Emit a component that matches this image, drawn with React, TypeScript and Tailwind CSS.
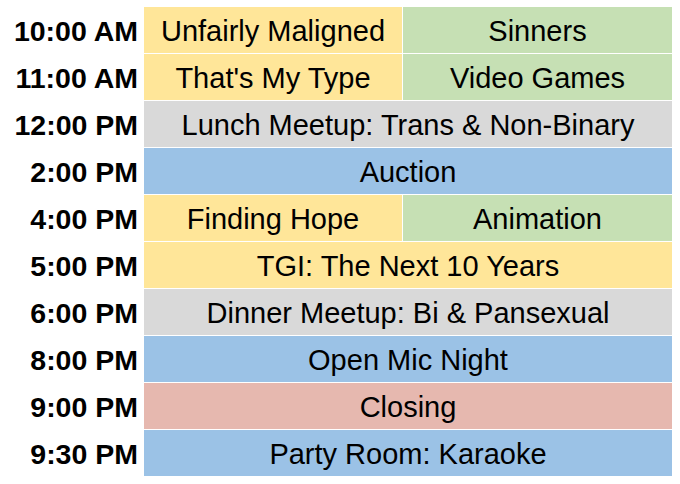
type Cell = { text: string; color: string };
type Row = { time: string; cells: Cell[] };

const Y = "bg-[#ffe699]";
const G = "bg-[#c6e0b4]";
const S = "bg-[#d9d9d9]";
const B = "bg-[#9bc2e6]";
const P = "bg-[#e6b8af]";

const rows: Row[] = [
  { time: "10:00 AM", cells: [{ text: "Unfairly Maligned", color: Y }, { text: "Sinners", color: G }] },
  { time: "11:00 AM", cells: [{ text: "That's My Type", color: Y }, { text: "Video Games", color: G }] },
  { time: "12:00 PM", cells: [{ text: "Lunch Meetup: Trans & Non-Binary", color: S }] },
  { time: "2:00 PM", cells: [{ text: "Auction", color: B }] },
  { time: "4:00 PM", cells: [{ text: "Finding Hope", color: Y }, { text: "Animation", color: G }] },
  { time: "5:00 PM", cells: [{ text: "TGI: The Next 10 Years", color: Y }] },
  { time: "6:00 PM", cells: [{ text: "Dinner Meetup: Bi & Pansexual", color: S }] },
  { time: "8:00 PM", cells: [{ text: "Open Mic Night", color: B }] },
  { time: "9:00 PM", cells: [{ text: "Closing", color: P }] },
  { time: "9:30 PM", cells: [{ text: "Party Room: Karaoke", color: B }] },
];

const App = () => {
  return (
    <div
      className="w-[680px] h-[484px] bg-white pt-[7px] flex flex-col gap-px text-black text-[29px] leading-none"
      style={{ fontFamily: '"Liberation Sans", Arial, sans-serif' }}
    >
      {rows.map((row) => (
        <div key={row.time} className="flex h-[46px]">
          <div className="w-[138px] flex items-center justify-end font-bold text-[28.5px] pt-[2px]">
            {row.time}
          </div>
          <div className="ml-[6px] w-[528px] flex gap-px">
            {row.cells.map((c, i) => (
              <div
                key={c.text}
                className={`${c.color} flex items-center justify-center pt-[2px] ${
                  row.cells.length === 1 ? "w-full" : i === 0 ? "w-[258px]" : "flex-1"
                }`}
              >
                {c.text}
              </div>
            ))}
          </div>
        </div>
      ))}
    </div>
  );
};

export default App;
